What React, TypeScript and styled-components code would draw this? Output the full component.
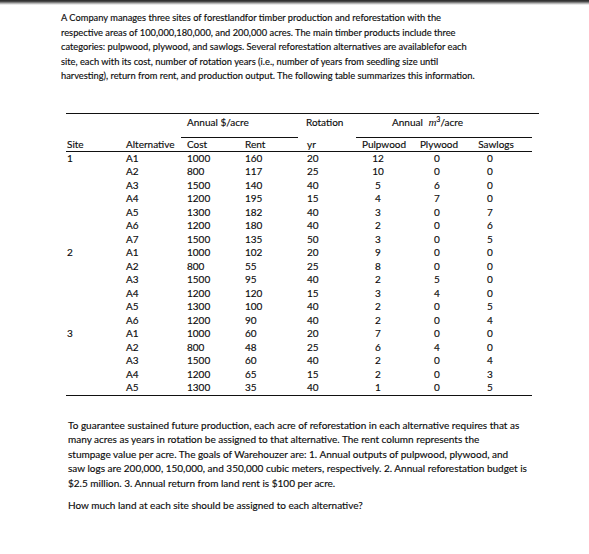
import React from "react";
import styled, { createGlobalStyle } from "styled-components";

const Global = createGlobalStyle`
  html, body { margin: 0; padding: 0; background: #ffffff; }
  body { font-family: "Lato", "Open Sans", sans-serif; color: #0d0d0d; }
`;

const Page = styled.div`
  width: 589px;
  height: 554px;
  background: #fff;
  display: flex;
  flex-direction: column;
  overflow: hidden;
`;

const TopShade = styled.div`
  height: 5px;
  flex: none;
  background: linear-gradient(#262626 0px, #4a4a4a 1.5px, #b8b8b8 3.5px, #ffffff 5px);
`;

const Paragraph = styled.div<{ $left: number; $top: number; $size: number }>`
  margin: ${(p) => p.$top}px 0 0 ${(p) => p.$left}px;
  font-size: ${(p) => p.$size}px;
  line-height: 14.5px;
  display: flex;
  flex-direction: column;
  -webkit-text-stroke: 0.15px #0d0d0d;
`;

const Line = styled.span`
  white-space: nowrap;
`;

const Question = styled.div`
  margin-top: 8px;
  white-space: nowrap;
`;

const TableWrap = styled.div`
  margin: 29px 0 0 66px;
  display: flex;
  flex-direction: column;
  font-size: 10px;
  -webkit-text-stroke: 0.15px #0d0d0d;
`;

const TopRule = styled.div`
  width: 473px;
  height: 1px;
  background: #111;
`;

const Grid = styled.div`
  width: 466px;
  display: grid;
  grid-template-columns: 60px 55px 60px 57px 58px 44px 74px 32px 26px;
`;

const GroupCell = styled.div<{ $span?: number; $pad?: number; $rule?: boolean }>`
  grid-column: span ${(p) => p.$span ?? 1};
  height: 24px;
  line-height: 14px;
  padding-top: 1px;
  padding-left: ${(p) => p.$pad ?? 0}px;
  border-bottom: 1px solid ${(p) => (p.$rule ? "#111" : "transparent")};
  white-space: nowrap;
  box-sizing: border-box;
`;

const HeadCell = styled.div<{ $pad?: number; $center?: boolean; $shift?: number }>`
  height: 14px;
  line-height: 13px;
  white-space: nowrap;
  border-bottom: 1px solid #111;
  box-sizing: border-box;
  display: flex;
  justify-content: ${(p) => (p.$center ? "center" : "flex-start")};
  padding-left: ${(p) => (p.$center ? (p.$shift ?? 0) * 2 : p.$pad ?? 0)}px;
`;

const Cell = styled.div<{ $pad?: number; $center?: boolean; $last?: boolean }>`
  height: 13.5px;
  line-height: 13.5px;
  white-space: nowrap;
  text-align: ${(p) => (p.$center ? "center" : "left")};
  padding-left: ${(p) => (p.$center ? 0 : p.$pad ?? 0)}px;
  border-bottom: ${(p) => (p.$last ? "1px solid #111" : "none")};
`;

const Sup = styled.sup`
  font-size: 7px;
  line-height: 0;
  vertical-align: 4px;
`;

const MathM = styled.span`
  font-family: "Liberation Serif", serif;
  font-style: italic;
  font-size: 11px;
  margin-left: 3px;
  -webkit-text-stroke: 0;
`;

type Row = [string, string, number, number, number, number, number, number];

const rows: Row[] = [
  ["1", "A1", 1000, 160, 20, 12, 0, 0],
  ["", "A2", 800, 117, 25, 10, 0, 0],
  ["", "A3", 1500, 140, 40, 5, 6, 0],
  ["", "A4", 1200, 195, 15, 4, 7, 0],
  ["", "A5", 1300, 182, 40, 3, 0, 7],
  ["", "A6", 1200, 180, 40, 2, 0, 6],
  ["", "A7", 1500, 135, 50, 3, 0, 5],
  ["2", "A1", 1000, 102, 20, 9, 0, 0],
  ["", "A2", 800, 55, 25, 8, 0, 0],
  ["", "A3", 1500, 95, 40, 2, 5, 0],
  ["", "A4", 1200, 120, 15, 3, 4, 0],
  ["", "A5", 1300, 100, 40, 2, 0, 5],
  ["", "A6", 1200, 90, 40, 2, 0, 4],
  ["3", "A1", 1000, 60, 20, 7, 0, 0],
  ["", "A2", 800, 48, 25, 6, 4, 0],
  ["", "A3", 1500, 60, 40, 2, 0, 4],
  ["", "A4", 1200, 65, 15, 2, 0, 3],
  ["", "A5", 1300, 35, 40, 1, 0, 5],
];

const intro = [
  "A Company manages three sites of forestlandfor timber production and reforestation with the",
  "respective areas of 100,000,180,000, and 200,000 acres. The main timber products include three",
  "categories: pulpwood, plywood, and sawlogs. Several reforestation alternatives are availablefor each",
  "site, each with its cost, number of rotation years (i.e., number of years from seedling size until",
  "harvesting), return from rent, and production output. The following table summarizes this information.",
];

const outro = [
  "To guarantee sustained future production, each acre of reforestation in each alternative requires that as",
  "many acres as years in rotation be assigned to that alternative. The rent column represents the",
  "stumpage value per acre. The goals of Warehouzer are: 1. Annual outputs of pulpwood, plywood, and",
  "saw logs are 200,000, 150,000, and 350,000 cubic meters, respectively. 2. Annual reforestation budget is",
  "$2.5 million. 3. Annual return from land rent is $100 per acre.",
];

export default function App() {
  return (
    <Page>
      <Global />
      <TopShade />
      <Paragraph $left={61} $top={6} $size={9.3}>
        {intro.map((l) => (
          <Line key={l}>{l}</Line>
        ))}
      </Paragraph>
      <TableWrap>
        <TopRule />
        <Grid>
          <GroupCell $span={2} />
          <GroupCell $span={2} $pad={6} $rule>
            Annual $/acre
          </GroupCell>
          <GroupCell $pad={8}>Rotation</GroupCell>
          <GroupCell $span={4} $pad={36} $rule>
            Annual <MathM>m</MathM>
            <Sup>3</Sup>/acre
          </GroupCell>

          <HeadCell $pad={1}>Site</HeadCell>
          <HeadCell>Alternative</HeadCell>
          <HeadCell $pad={6}>Cost</HeadCell>
          <HeadCell $pad={4}>Rent</HeadCell>
          <HeadCell $pad={9}>yr</HeadCell>
          <HeadCell $center $shift={6}>Pulpwood</HeadCell>
          <HeadCell $center $shift={2}>Plywood</HeadCell>
          <HeadCell $center $shift={6}>Sawlogs</HeadCell>
          <HeadCell />

          {rows.map((r, i) => {
            const last = i === rows.length - 1;
            return (
              <React.Fragment key={i}>
                <Cell $pad={1} $last={last}>{r[0]}</Cell>
                <Cell $last={last}>{r[1]}</Cell>
                <Cell $pad={6} $last={last}>{r[2]}</Cell>
                <Cell $pad={4} $last={last}>{r[3]}</Cell>
                <Cell $pad={9} $last={last}>{r[4]}</Cell>
                <Cell $center $last={last}>{r[5]}</Cell>
                <Cell $center $last={last}>{r[6]}</Cell>
                <Cell $center $last={last}>{r[7]}</Cell>
                <Cell $last={last} />
              </React.Fragment>
            );
          })}
        </Grid>
      </TableWrap>
      <Paragraph $left={68} $top={22} $size={10}>
        {outro.map((l) => (
          <Line key={l}>{l}</Line>
        ))}
        <Question>How much land at each site should be assigned to each alternative?</Question>
      </Paragraph>
    </Page>
  );
}
